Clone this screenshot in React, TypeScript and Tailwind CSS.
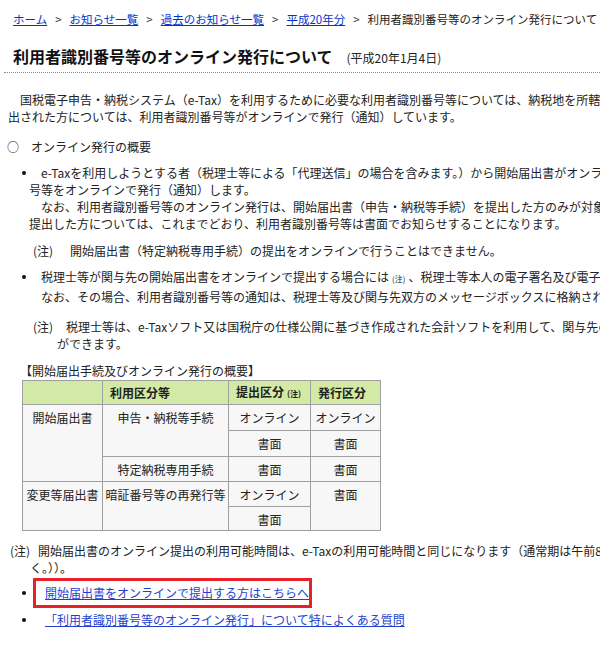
import React from 'react';

const Bullet: React.FC = () => (
  <span className="w-[7px] shrink-0 flex justify-start h-[17px] items-center">
    <span className="block w-[4px] h-[4px] rounded-full bg-[#111]" />
  </span>
);

const crumbs = ['ホーム', 'お知らせ一覧', '過去のお知らせ一覧', '平成20年分'];

const cell = 'border border-[#9f9f9f] bg-[#f7f7f7] text-center align-top pt-[4px] leading-[17px] px-0';
const head = 'border border-[#9f9f9f] bg-[#d3eaa6] text-left font-bold pl-[7px] leading-[17px]';

const sp = '\u3000';

export default function App() {
  return (
    <div className="w-full overflow-hidden bg-white">
      <div
        className="w-[820px] pt-[10px] pb-[30px] text-[12px] leading-[17px] text-[#222] whitespace-nowrap"
        style={{ fontFamily: '"Noto Sans CJK JP", "Noto Sans", sans-serif' }}
      >
        {/* breadcrumb */}
        <div className="px-[13px] text-[11.5px] leading-[18px] flex items-center">
          {crumbs.map((c) => (
            <React.Fragment key={c}>
              <a href="#" className="text-[#0033cc] underline">{c}</a>
              <span className="mx-[8px] text-[#333]">&gt;</span>
            </React.Fragment>
          ))}
          <span>利用者識別番号等のオンライン発行について</span>
        </div>

        {/* heading */}
        <div className="mx-[4px] mt-[16px] px-[9px] pb-[4px] border-b border-dotted border-[#888] flex items-end">
          <h1 className="text-[16px] font-bold leading-[24px] text-[#111]">利用者識別番号等のオンライン発行について</h1>
          <span className="ml-[14px] text-[12px] leading-[21px]">(平成20年1月4日)</span>
        </div>

        {/* intro */}
        <div className="px-[8px] mt-[18px]">
          <div>{sp}国税電子申告・納税システム（e-Tax）を利用するために必要な利用者識別番号等については、納税地を所轄する税務署に開始届出書を提</div>
          <div>出された方については、利用者識別番号等がオンラインで発行（通知）しています。</div>
        </div>

        <div className="px-[7px] mt-[13px]">○{sp}オンライン発行の概要</div>

        {/* bullet 1 */}
        <div className="flex pl-[22px] mt-[9px]">
          <Bullet />
          <div>
            <div>{sp}e-Taxを利用しようとする者（税理士等による「代理送信」の場合を含みます。）から開始届出書がオンラインで提出された場合には、利用者識別番</div>
            <div>号等をオンラインで発行（通知）します。</div>
            <div>{sp}なお、利用者識別番号等のオンライン発行は、開始届出書（申告・納税等手続）を提出した方のみが対象となり、書面で開始届出書を</div>
            <div>提出した方については、これまでどおり、利用者識別番号等は書面でお知らせすることになります。</div>
          </div>
        </div>

        <div className="pl-[33px] mt-[10px] flex">
          <span className="w-[37px] shrink-0">(注)</span>
          <span>開始届出書（特定納税専用手続）の提出をオンラインで行うことはできません。</span>
        </div>

        {/* bullet 2 */}
        <div className="flex pl-[22px] mt-[9px]">
          <Bullet />
          <div>
            <div>
              {sp}税理士等が関与先の開始届出書をオンラインで提出する場合には<span className="text-[8px] mx-[3px]">(注)</span>、税理士等本人の電子署名及び電子証明書を添付して送信することができます。
            </div>
            <div className="mt-[1px]">{sp}なお、その場合、利用者識別番号等の通知は、税理士等及び関与先双方のメッセージボックスに格納されます。</div>
          </div>
        </div>

        <div className="pl-[33px] mt-[13px]">
          <div className="flex">
            <span className="w-[33px] shrink-0">(注)</span>
            <span>税理士等は、e-Taxソフト又は国税庁の仕様公開に基づき作成された会計ソフトを利用して、関与先の開始届出書をオンラインで提出すること</span>
          </div>
          <div className="pl-[24px]">ができます。</div>
        </div>

        {/* table */}
        <div className="pl-[20px] mt-[10px] leading-[17px]">【開始届出手続及びオンライン発行の概要】</div>
        <table className="ml-[22px] mt-[1px] border-collapse table-fixed w-[358px] text-[12px]">
          <colgroup>
            <col className="w-[80px]" />
            <col className="w-[126px]" />
            <col className="w-[82px]" />
            <col className="w-[70px]" />
          </colgroup>
          <thead>
            <tr className="h-[24px]">
              <th className={head}></th>
              <th className={head}>利用区分等</th>
              <th className={head}>
                提出区分<span className="text-[8px] ml-[3px]">(注)</span>
              </th>
              <th className={head}>発行区分</th>
            </tr>
          </thead>
          <tbody>
            <tr className="h-[26px]">
              <td className={cell} rowSpan={3}>開始届出書</td>
              <td className={cell} rowSpan={2}>申告・納税等手続</td>
              <td className={cell}>オンライン</td>
              <td className={cell}>オンライン</td>
            </tr>
            <tr className="h-[26px]">
              <td className={cell}>書面</td>
              <td className={cell}>書面</td>
            </tr>
            <tr className="h-[25px]">
              <td className={cell}>特定納税専用手続</td>
              <td className={cell}>書面</td>
              <td className={cell}>書面</td>
            </tr>
            <tr className="h-[25px]">
              <td className={cell} rowSpan={2}>変更等届出書</td>
              <td className={cell} rowSpan={2}>暗証番号等の再発行等</td>
              <td className={cell}>オンライン</td>
              <td className={cell} rowSpan={2}>書面</td>
            </tr>
            <tr className="h-[24px]">
              <td className={cell}>書面</td>
            </tr>
          </tbody>
        </table>

        <div className="pl-[10px] mt-[11px]">
          <div className="flex">
            <span className="w-[28px] shrink-0">(注)</span>
            <span>開始届出書のオンライン提出の利用可能時間は、e-Taxの利用可能時間と同じになります（通常期は午前8時30分から午後5時まで（土日祝日等を除</span>
          </div>
          <div className="pl-[20px]">く。））。</div>
        </div>

        {/* links */}
        <div className="flex pl-[22px] mt-[2px] items-center">
          <Bullet />
          <div className="ml-[4px] w-[279px] border-[3px] border-[#e8202a] pl-[9px] py-[3px] leading-[18px]">
            <a href="#" className="text-[#1f3fd0] underline">開始届出書をオンラインで提出する方はこちらへ</a>
          </div>
        </div>
        <div className="flex pl-[22px] mt-[3px]">
          <Bullet />
          <div className="pl-[16px]">
            <a href="#" className="text-[#1f3fd0] underline">「利用者識別番号等のオンライン発行」について特によくある質問</a>
          </div>
        </div>
      </div>
    </div>
  );
}
